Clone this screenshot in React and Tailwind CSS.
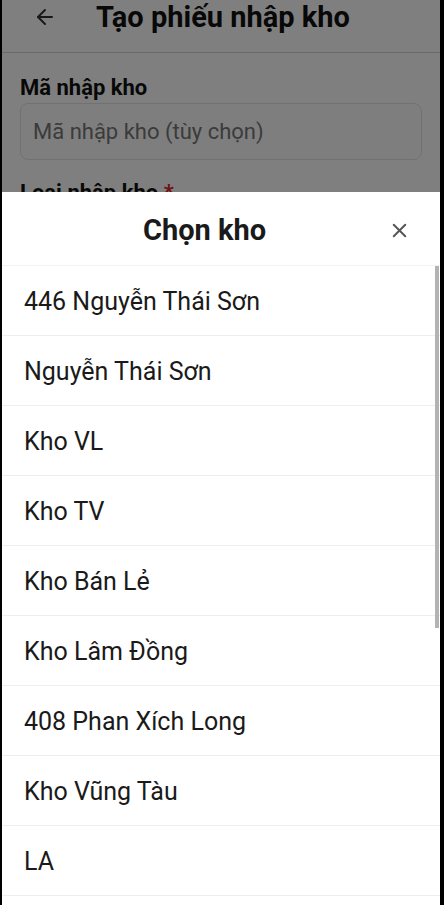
import { ArrowLeft, X } from 'lucide-react';

const warehouses = [
    '446 Nguyễn Thái Sơn',
    'Nguyễn Thái Sơn',
    'Kho VL',
    'Kho TV',
    'Kho Bán Lẻ',
    'Kho Lâm Đồng',
    '408 Phan Xích Long',
    'Kho Vũng Tàu',
    'LA',
];

export default function App() {
    return (
        <div className="w-[444px] h-[905px] bg-black flex pl-[2px] pr-[4px] overflow-hidden" style={{ fontFamily: 'Roboto, "Noto Sans", sans-serif' }}>
            <div className="relative w-[438px] h-full bg-white overflow-hidden">
                {/* page behind the sheet */}
                <div className="flex flex-col">
                    <div className="h-[53px] flex items-start border-b border-[#d4d4d4]">
                        <div className="w-[94px] flex pl-[31px] pt-[5px]">
                            <ArrowLeft size={24} strokeWidth={2} className="text-[#333]" />
                        </div>
                        <h1 className="text-[29px] font-bold text-[#111] leading-[34px]">Tạo phiếu nhập kho</h1>
                    </div>
                    <div className="px-[18px] pt-[21px]">
                        <label className="block text-[22px] font-bold text-[#111] leading-[28px]">Mã nhập kho</label>
                        <div className="mt-[1px] h-[57px] rounded-[8px] border border-[#e3e3e3] bg-[#fdfdfd] flex items-center px-[12px] text-[22px] text-[#777]">
                            Mã nhập kho (tùy chọn)
                        </div>
                        <label className="block mt-[19px] text-[22px] font-bold text-[#111] leading-[28px]">
                            Loại nhập kho <span className="text-[#dc2626]">*</span>
                        </label>
                    </div>
                </div>

                <div className="absolute inset-0 bg-black/50" />

                {/* bottom sheet */}
                <div className="absolute left-0 right-0 top-[192px] bottom-0 bg-white flex flex-col">
                    <div className="h-[74px] flex items-center pt-[4px] border-b border-[#f3f3f3]">
                        <h2 className="pl-[141px] text-[29px] font-bold text-[#1a1a1a]">Chọn kho</h2>
                        <button className="ml-auto mr-[29px] text-[#555]">
                            <X size={23} strokeWidth={2} />
                        </button>
                    </div>
                    <div className="relative flex-1 overflow-hidden">
                        {warehouses.map((name) => (
                            <div key={name} className="h-[70px] flex items-center pt-[3px] pl-[22px] border-b border-[#eeeeee] text-[25px] text-[#1a1a1a]">
                                {name}
                            </div>
                        ))}
                        <div className="absolute right-[1px] top-0 w-[4px] h-[362px] bg-[#b3b3b3]" />
                    </div>
                </div>
            </div>
        </div>
    );
}
